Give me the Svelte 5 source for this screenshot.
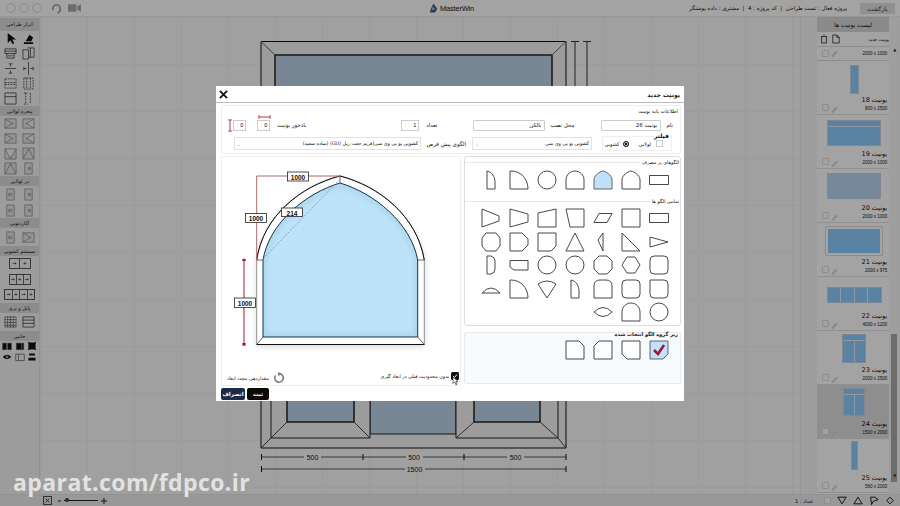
<script lang="ts">
  const ui = '"DejaVu Sans", "Liberation Sans", sans-serif';

  const toolIcons = {
    arrow: '<path fill="#111" stroke="none" d="M4 1v11l3-3 2 4 2-1-2-4h4z"/>',
    eraser: '<path fill="#111" stroke="none" d="M2 11h10v2H2zM4 10l4-7 4 3-2 4z"/>',
    stackH: '<path d="M1 2h12v5H1zM3 7v5h8V7M1 4.5h12M4 9.500h6"/>',
    stackV: '<path d="M1 3h6v10H1zM6 1h7v10H7M9 1v10"/>',
    splitH: '<path d="M1 7h12M7 2v3M7 9v3M5 2h4M5 12h4"/>',
    splitV: '<path d="M7 0v14M2 7h3M9 7h3M2 5v4M12 5v4"/>',
    barsH: '<path d="M1 2h12v10H1zM1 6h12M1 8h12" stroke-dasharray="2 1"/>',
    barsV: '<path d="M2 1h10v12H2zM5 1v12M9 1v12" stroke-dasharray="2 1"/>',
    box: '<path d="M1 1h12v12H1zM1 5h12"/>',
    dims: '<path d="M4 1v12M9 1v12M2 1h4M2 13h4" stroke-dasharray="2 1"/>',
    w1: '<path stroke="#8a8a8a" fill="#e6e6e6" d="M1 2h12v10H1zM1 2l8 5-8 5M9 6v2"/>',
    w2: '<path stroke="#8a8a8a" fill="#e6e6e6" d="M1 2h12v10H1zM13 2L5 7l8 5M5 6v2"/>',
    w3: '<path stroke="#8a8a8a" fill="#e6e6e6" d="M1 2h12v11H1zM1 2l6 11 6-11M6 11h2"/>',
    w4: '<path stroke="#8a8a8a" fill="#e6e6e6" d="M1 1h12v12H1zM1 13L7 2l6 11M6 3h2"/>',
    door1: '<path stroke="#8a8a8a" fill="#e6e6e6" d="M3 1h8v12H3zM5 6h3v2H5z"/>',
    door2: '<path stroke="#8a8a8a" fill="#e6e6e6" d="M3 1h8v12H3zM7 6h2v2H7z"/>',
    grid: '<path d="M1 2h12v11H1zM1 5h12M1 8h12M1 11h12M4 2v11M7 2v11M10 2v11" stroke-dasharray="1.500 .5"/>',
    lines: '<path d="M1 2h12v11H1zM1 5.500h12M1 9h12"/>',
    sideA: '<path fill="#111" d="M1 3h5v9H1zM8 3h5v9H8z"/>',
    sideB: '<path fill="#111" d="M2 3h7v9H2zM10 3h2v9h-2z"/>',
    sideC: '<path fill="#111" stroke="none" d="M1 1l3 1 6 0 3-1-1 3v6l1 3-3-1H4l-3 1 1-3V4z"/>',
    sideD: '<path d="M1 3h12v9H1zM5 3v9"/>',
    sideE: '<path fill="#111" stroke="none" d="M1 7q6-6 12 0-6 6-12 0z"/><circle cx="7" cy="7" r="2" fill="#999" stroke="none"/>',
    sideF: '<path fill="#111" stroke="none" d="M3 2h8v3H3zM2 8h10v4H2z"/>'
  };

  const toolGroups = [
    { title: 'ابزار طراحی', tall: true, rowH: 15, rows: [['arrow', 'eraser'], ['stackH', 'stackV'], ['splitH', 'splitV'], ['barsH', 'barsV'], ['box', 'dims']] },
    { title: 'پنجره لولایی', rowH: 15, rows: [['w1', 'w2'], ['w1', 'w2'], ['w3', 'w4'], ['w4', 'door2']] },
    { title: 'در لولایی', rowH: 16, rows: [['door1', 'door2'], ['door1', 'door2']] },
    { title: 'آکاردئونی', rowH: 18, rows: [['door1', 'w1']] },
    { title: 'سیستم کشویی', rowH: 15.5, rows: [['slide2'], ['slide3'], ['slide4']] },
    { title: 'پانل و نری', rowH: 18, rows: [['grid', 'lines']] },
    { title: 'جانبی', rowH: 11, small: true, rows: [['sideA', 'sideB', 'sideC'], ['sideE', 'sideD', 'sideF']] }
  ];

  const slideWidth = { slide2: 22, slide3: 22, slide4: 31 };
  const slidePanes = { slide2: 2, slide3: 3, slide4: 4 };

  const units = [
    { name: 'یونیت 18', size: '800 x 2500', w: 7, h: 27, panes: 1, top: 5 },
    { name: 'یونیت 19', size: '2000 x 1000', w: 52, h: 24, panes: 1, bar: true, top: 6 },
    { name: 'یونیت 20', size: '2000 x 1000', w: 52, h: 24, panes: 1, pale: true, top: 5 },
    { name: 'یونیت 21', size: '2000 x 975', w: 52, h: 24, panes: 1, framed: true, top: 6 },
    { name: 'یونیت 22', size: '4000 x 1200', w: 53, h: 14, panes: 4, top: 11 },
    { name: 'یونیت 23', size: '2000 x 2500', w: 22, h: 27, panes: 2, bar: true, top: 4 },
    { name: 'یونیت 24', size: '1500 x 2000', w: 20, h: 26, panes: 2, bar: true, top: 4, active: true },
    { name: 'یونیت 25', size: '560 x 2000', w: 5, h: 27, panes: 1, top: 3 }
  ];

  const circle = 'M1 10a9 9 0 1 0 18 0a9 9 0 1 0-18 0Z';
  const arch = 'M1 19V10C1 5 5 1 10 1S19 5 19 10V19Z';
  const pointed = 'M1 19V9C2 5 6 2 10 1C14 2 18 5 19 9V19Z';
  const quarter = 'M1 19V1H2C12 1 19 9 19 19Z';
  const halfArch = 'M6 19V1C11 2 14 7 14 12V19Z';

  const favorites = [
    { d: 'M0.500 5.500H19.500V14.500H0.500Z' },
    { d: pointed },
    { d: pointed, on: true },
    { d: arch },
    { d: circle },
    { d: quarter },
    { d: halfArch }
  ];

  const allShapes = [
    'M0.500 5.500H19.500V14.500H0.500Z', 'M1 1H19V19H1Z', 'M6 5.500H19L14 14.500H1Z', 'M1 1H19V19H5Z', 'M1 5L19 1V19H1Z', 'M1 1L19 6V14L1 19Z', 'M1 1L18 8V13L1 19Z',
    'M1 5L19 10L1 15Z', 'M1 1L19 19H1Z', 'M10 1L5 8L10 19Z', 'M10 1L19 19H1Z', 'M1 1H19V14L14 19H1Z', 'M1 1H13L19 7V13L13 19H1Z', 'M5 1H15L19 6V14L15 19H5L1 14V6Z',
    'M5 1H15Q19 1 19 5V15Q19 19 15 19H5Q1 19 1 15V5Q1 1 5 1Z', 'M6 2H14L19 10L14 18H6L1 10Z', 'M6 1H14L19 6V14L14 19H6L1 14V6Z', circle, circle, 'M1 5.500H19V15H5L1 12Z', 'M6 1H10Q14 2 14 6V14Q14 18 10 19H6Z',
    'M1 1H15Q19 1 19 5V15Q19 19 15 19H5Q1 19 1 15Z', 'M5 1H15Q19 1 19 5V15Q19 19 15 19H5Q1 19 1 15V5Q1 1 5 1Z', 'M1 19V7Q1 1 7 1H13Q19 1 19 7V19Z', halfArch, 'M1 5Q10 -1 19 5L10 19Z', quarter, 'M1 14Q10 4 19 14Z',
    circle, arch, 'M1 10Q10 1 19 10Q10 19 1 10Z'
  ];

  const subShapes = [
    { d: 'M1 1H19V14L14 19H1Z', on: true },
    { d: 'M1 1H19V19H6L1 14Z' },
    { d: 'M6 1H19V19H1V6Z' },
    { d: 'M1 1H14L19 6V19H1Z' }
  ];
</script>

<div class="app" style="--ui: {ui}">
  <header class="topbar">
    <div class="top-icons">
      <span class="round"></span><span class="round"></span><span class="round"></span>
      <svg class="headset" viewBox="0 0 12 12" width="11" height="11"><path fill="none" stroke="#aaa" stroke-width="2" d="M2 8V6a4 4 0 0 1 8 0v3l-3 2"/></svg>
      <svg viewBox="0 0 14 10" width="13" height="10"><path fill="#aaa" d="M0 1h9v8H0zM10 3l4-2v8l-4-2z"/></svg>
    </div>
    <div class="logo">
      <svg viewBox="0 0 12 12" width="9" height="10"><path fill="#3d5f86" d="M6 0L11 7 8 12H1L3 6z"/><path fill="#c9d4e0" d="M5 4l3 3-4 2z"/></svg>
      <span>MasterWin</span>
    </div>
    <div class="project">پروژه فعال : تست طراحی &nbsp;|&nbsp; کد پروژه : 4 &nbsp;|&nbsp; مشتری : داده پوشنگر</div>
    <button class="back">بازگشت</button>
  </header>

  <div class="body">
    <aside class="tools">
      {#each toolGroups as g}
        <div class="tool-title" class:tall={g.tall}>{g.title}</div>
        {#each g.rows as row}
          <div class="tool-row" style="height: {g.rowH}px">
            {#each row as name}
              {#if slidePanes[name]}
                <div class="slider" style="width: {slideWidth[name]}px">
                  {#each Array(slidePanes[name]) as _, i}
                    <span>{i % 2 ? '+' : '→'}</span>
                  {/each}
                </div>
              {:else}
                <svg viewBox="0 0 14 14" width={g.small ? 10 : 13} height={g.small ? 10 : 13} fill="none" stroke="#333" stroke-width=".8">{@html toolIcons[name]}</svg>
              {/if}
            {/each}
          </div>
        {/each}
      {/each}
    </aside>

    <main class="canvas">
      <svg class="drawing" viewBox="40 17 760 477" width="760" height="477">
        <g fill="none" stroke="#111">
          <path fill="#f4f4f4" stroke="#111" d="M261 41.500H566V448H261Z"/>
          <path fill="#bed3ea" stroke="#222" stroke-width="1.500" d="M275 55H552V100H275Z"/>
          <path d="M261 41.500L275 55M566 41.500L552 55" stroke="#666"/>
          <path d="M575 41.500V100M587 41.500V100M571 41.500h8M583 41.500h8" stroke="#333"/>
          <path fill="#bed3ea" stroke="#222" d="M370 380H456V434H370Z"/>
          <path fill="#f4f4f4" stroke="#222" stroke-width="1" d="M271 380H370V438H271ZM456 380H558V438H456Z"/>
          <path fill="#bed3ea" stroke="#222" stroke-width="1.500" d="M287 380H354V422H287ZM474 380H540V422H474Z"/>
          <path d="M271 438L287 422M370 438L354 422M456 438L474 422M558 438L540 422M261 448L271 438M566 448L558 438" stroke="#444"/>
          <path d="M261 457H566M261 469H566" stroke="#333" stroke-width=".8"/>
          <path d="M261.500 454v6M363 454v6M464 454v6M566 454v6M261.500 466v6M566 466v6" stroke="#111"/>
        </g>
        <g class="dim-text">
          <rect x="304" y="452" width="17" height="9" fill="#fbfbfb"/><text x="312.500" y="459.500">500</text>
          <rect x="406" y="452" width="17" height="9" fill="#fbfbfb"/><text x="414" y="459.500">500</text>
          <rect x="507" y="452" width="17" height="9" fill="#fbfbfb"/><text x="515.500" y="459.500">500</text>
          <rect x="405" y="464" width="20" height="9" fill="#fbfbfb"/><text x="414.500" y="471.500">1500</text>
        </g>
      </svg>
    </main>

    <aside class="side">
      <div class="list">
        <div class="list-title">لیست یونیت ها</div>
        <div class="list-tools">
          <svg viewBox="0 0 10 12" width="8" height="10"><path fill="none" stroke="#222" d="M1 3h8M2 3v8h6V3M4 1h2"/></svg>
          <svg viewBox="0 0 10 12" width="8" height="10"><path fill="none" stroke="#222" d="M1 1h5l3 3v7H1zM6 1v3h3"/></svg>
          <span class="new">یونیت جدید</span>
        </div>
        <div class="stub"><span class="check"></span><span class="pen"></span><small>2000 x 1000</small></div>
        {#each units as u}
          <div class="unit" class:active={u.active}>
            <div class="thumb-wrap" style="padding-top: {u.top}px">
              <div class="thumb" class:pale={u.pale} class:framed={u.framed} class:bar={u.bar} style="width: {u.w}px; height: {u.h}px">
                {#each Array(u.panes) as _}<i></i>{/each}
              </div>
            </div>
            <div class="unit-foot">
              <span class="check"></span><span class="pen"></span>
              <div class="unit-text"><b>{u.name}</b><small>{u.size}</small></div>
            </div>
          </div>
        {/each}
      </div>
      <div class="scroll"><span class="arrow">▲</span><div class="thumb-bar"></div><span class="arrow">▼</span></div>
    </aside>
  </div>

  <footer class="bottombar">
    <svg class="fit" viewBox="0 0 10 10" width="9" height="9"><path fill="none" stroke="#333" d="M.5.5h9v9h-9zM3 3l4 4M7 3L3 7"/></svg>
    <svg class="zoom-btn minus" viewBox="0 0 6 6" width="6" height="6"><path stroke="#222" d="M1 3h3"/></svg>
    <span class="zoom-track"><i></i></span>
    <svg class="zoom-btn" viewBox="0 0 6 6" width="6" height="6"><path stroke="#222" d="M0 3h6M3 0v6"/></svg>
    <span class="count">تعداد : 1</span>
    <div class="foot-icons">
      <span class="check"></span>
      <svg viewBox="0 0 12 10" width="10" height="9"><path fill="none" stroke="#222" stroke-width="1.200" d="M1 1h10L6 9z"/></svg>
      <svg viewBox="0 0 12 10" width="10" height="9"><path fill="none" stroke="#222" stroke-width="1.200" d="M1 9h10L6 1z"/></svg>
      <svg viewBox="0 0 12 10" width="10" height="9"><path fill="none" stroke="#222" stroke-width="1.200" d="M2 1h5l4 3-6 2-2 4z"/></svg>
      <svg viewBox="0 0 12 10" width="10" height="9"><path fill="none" stroke="#222" stroke-width="1.200" d="M6 1l4 4-4 4-4-4z"/></svg>
    </div>
  </footer>

  <div class="backdrop"></div>

  <div class="modal">
    <div class="modal-head">
      <svg viewBox="0 0 10 10" width="9" height="9"><path stroke="#111" stroke-width="2" d="M1 1l8 8M9 1L1 9"/></svg>
      <b>یونیت جدید</b>
    </div>

    <section class="basic">
      <div class="basic-title">اطلاعات پایه یونیت</div>
      <div class="form-row r1">
        <label class="l-name" for="n">نام</label>
        <input id="n" class="f-name" value="یونیت 26" />
        <label class="l-place" for="p">محل نصب</label>
        <input id="p" class="f-place" value="بالکن" />
        <label class="l-count" for="p">تعداد</label>
        <div class="spin f-count"><span>1</span><em>:</em></div>
        <label class="l-wind" for="p">بادخور یونیت</label>
        <div class="spin f-wind"><span>0</span><em>:</em>
          <svg class="h-arrow" viewBox="0 0 14 6" width="13" height="6"><path stroke="#a33044" fill="none" d="M1 1v4M13 1v4M1 3h12"/></svg>
        </div>
        <div class="spin f-wind2"><span>0</span><em>:</em>
          <svg class="v-arrow" viewBox="0 0 6 14" width="6" height="13"><path stroke="#a33044" fill="none" d="M1 1h4M1 13h4M3 1v12"/></svg>
        </div>
      </div>
      <div class="form-row r2">
        <div class="filter">
          <span class="legend">فیلتر</span>
          <span class="box"></span><span class="opt">لولایی</span>
          <span class="radio"></span><span class="opt">کشویی</span>
        </div>
        <div class="select f-type"><span>کشویی یو پی وی سی</span><em>⌄</em></div>
        <span class="l-default">الگوی پیش فرض</span>
        <div class="select f-default"><span>کشویی یو پی وی سی(فریم جفت ریل (GU) (ساده سفید)</span><em>⌄</em></div>
      </div>
    </section>

    <div class="panels">
      <section class="preview">
        <svg viewBox="221 156 238 208" width="238" height="208">
          <defs>
            <clipPath id="glassClip"><path d="M262 336V259C268 222 305 192 339 182C373 192 410 222 416.700 259V336Z"/></clipPath>
            <filter id="soft" x="-20%" y="-20%" width="140%" height="140%"><feGaussianBlur stdDeviation="3"/></filter>
          </defs>
          <path d="M255.700 343.500V259C262 215 300 185 339 175C378 185 416 215 423.300 259V343.500Z" fill="#d5d5d5" filter="url(#soft)" transform="translate(0 2)"/>
          <path d="M255.700 343.500V259C262 215 300 185 339 175C378 185 416 215 423.300 259V343.500Z" fill="#fff" stroke="#777" stroke-width=".8"/>
          <path d="M255.700 259C262 215 300 185 339 175C378 185 416 215 423.300 259" fill="none" stroke="#111" stroke-width="1"/>
          <path d="M262 336V259C268 222 305 192 339 182C373 192 410 222 416.700 259V336Z" fill="#bde3f8"/>
          <g clip-path="url(#glassClip)"><path d="M262 336V259C268 222 305 192 339 182C373 192 410 222 416.700 259V336Z" fill="none" stroke="#a5cfe6" stroke-width="5" filter="url(#soft)"/></g>
          <path d="M262 336V259C268 222 305 192 339 182C373 192 410 222 416.700 259V336Z" fill="none" stroke="#15344a" stroke-width="1"/>
          <path d="M255.700 343.500L262 336M423.300 343.500L416.700 336M339 175V182M255.700 259H262M423.300 259H416.700" stroke="#444" stroke-width=".8"/>
          <path d="M255.700 343.500H423.300" stroke="#111" stroke-width="1"/>
          <path d="M339 178L262 258" stroke="#7c93ad" stroke-width=".8" stroke-dasharray="2 1.500" fill="none"/>
          <path d="M255.700 259V175H339" fill="none" stroke="#a96b6b" stroke-width="1"/>
          <path d="M243 258V344M241 259h4M241 344h4" fill="none" stroke="#a01c33" stroke-width="1"/>
          <path d="M243 257l-2 3h4zM243 345l-2-3h4z" fill="#a01c33"/>
          <g class="dim-box">
            <rect x="286.500" y="171" width="21" height="9"/><text x="297" y="178.500">1000</text>
            <rect x="244.500" y="212.500" width="21" height="9"/><text x="255" y="220">1000</text>
            <rect x="280.500" y="207" width="21" height="8.500"/><text x="291" y="214.500">214</text>
            <rect x="233.500" y="297" width="21" height="9.500"/><text x="244" y="305">1000</text>
          </g>
        </svg>
        <div class="preview-foot">
          <div class="reset">
            <span>مقداردهی مجدد ابعاد</span>
            <svg viewBox="0 0 14 14" width="12" height="12"><path fill="none" stroke="#777" stroke-width="1.800" d="M8 2A5 5 0 1 1 3 4"/><path fill="#777" d="M6 0l4 2-4 3z"/></svg>
          </div>
          <div class="no-limit">
            <span>بدون محدودیت قبلی در ابعاد گیری</span>
            <span class="tick">
              <svg viewBox="0 0 8 8" width="8" height="8"><rect width="8" height="8" rx="1.500" fill="#111"/><path d="M2 4l1.500 1.500L6 2.500" fill="none" stroke="#fff"/></svg>
              <svg class="cursor" viewBox="0 0 8 12" width="7" height="10"><path d="M1 1v8l2-2 1.500 3.500 1.500-.7L4.500 6.500H7z" fill="#fff" stroke="#111" stroke-width=".7"/></svg>
            </span>
          </div>
        </div>
      </section>

      <div class="picker">
        <section class="shapes">
          <div class="shape-title first"><span>الگوهای پر مصرف</span></div>
          <div class="shape-grid fav">
            {#each favorites as s}
              <svg viewBox="0 0 20 20" width="20" height="20"><path d={s.d} class:on={s.on} /></svg>
            {/each}
          </div>
          <div class="shape-title"><span>تمامی الگو ها</span></div>
          <div class="shape-grid">
            {#each allShapes as d}
              <svg viewBox="0 0 20 20" width="20" height="20"><path {d} /></svg>
            {/each}
          </div>
        </section>
        <section class="sub">
          <div class="sub-title">زیر گروه الگو انتخاب شده</div>
          <div class="shape-grid">
            {#each subShapes as s}
              <div class="sub-cell">
                <svg viewBox="0 0 20 20" width="20" height="20">
                  <path d={s.d} class:on={s.on} />
                  {#if s.on}<path class="mark" d="M5 10l4 4 6-9"/>{/if}
                </svg>
              </div>
            {/each}
          </div>
        </section>
      </div>
    </div>

    <div class="actions">
      <button class="cancel">انصراف</button>
      <button class="save">ثبت</button>
    </div>
  </div>

  <div class="watermark">aparat.com/fdpco.ir</div>
</div>

<style>
  :global(body) { margin: 0; }

  .app {
    position: relative;
    width: 900px;
    height: 506px;
    overflow: hidden;
    display: flex;
    flex-direction: column;
    background: #fbfbfb;
    font-family: var(--ui);
    color: #111;
  }

  /* top */
  .topbar {
    height: 17px;
    flex: none;
    display: flex;
    align-items: center;
    background: #fff;
    border-bottom: 1px solid #ececec;
    box-sizing: border-box;
    padding: 0 5px 0 6px;
    position: relative;
  }
  .top-icons { display: flex; align-items: center; gap: 2px; width: 80px; }
  .round { width: 10px; height: 10px; border-radius: 50%; border: 1px solid #d8d8d8; box-sizing: border-box; margin-right: 1px; }
  .headset { margin: 0 4px 0 6px; }
  .logo { margin-left: 343px; display: flex; align-items: center; gap: 2px; font: 7.500px "Liberation Sans", sans-serif; color: #222; letter-spacing: -.2px; }
  .project { margin-left: auto; margin-right: 13px; font-size: 5.500px; direction: rtl; color: #111; white-space: nowrap; }
  .back {
    width: 35px; height: 11px; padding: 0; border: 0; border-radius: 1px;
    background: #e2e2e2; font: 6px var(--ui); color: #333;
  }

  .body { flex: 1; display: flex; min-height: 0; }

  /* left tools */
  .tools { width: 39px; flex: none; background: #f5f5f5; border-right: 1px solid #e4e4e4; padding-top: 1px; box-sizing: content-box; }
  .tool-title { height: 10px; line-height: 10px; background: #dcdcdc; text-align: center; font-size: 5px; color: #111; direction: rtl; white-space: nowrap; overflow: hidden; }
  .tool-title.tall { height: 13px; line-height: 13px; }
  .tool-row { display: flex; align-items: center; justify-content: space-evenly; }
  .slider { height: 11px; display: flex; border: 1px solid #555; box-sizing: border-box; background: #f2f2f2; }
  .slider span { flex: 1; font-size: 5px; line-height: 9px; text-align: center; border-right: 1px solid #666; color: #111; }
  .slider span:last-child { border: 0; }

  .canvas {
    flex: 1;
    position: relative;
    overflow: hidden;
    background-image:
      linear-gradient(#f3f3f3 1px, transparent 1px),
      linear-gradient(90deg, #f3f3f3 1px, transparent 1px);
    background-size: 47px 47px;
  }
  .drawing { display: block; }
  .dim-text text { font: 7px "Liberation Sans", sans-serif; text-anchor: middle; fill: #111; }

  /* right list */
  .side { width: 100px; flex: none; display: flex; padding: 0 2px 0 16px; box-sizing: border-box; background: #f7f7f7; border-left: 1px solid #eaeaea; }
  .list { width: 74px; display: flex; flex-direction: column; overflow: hidden; background: #fff; }
  .list-title { height: 15px; line-height: 15px; flex: none; background: #d8d8d8; text-align: center; font-size: 6px; direction: rtl; }
  .list-tools { height: 14px; flex: none; display: flex; align-items: center; gap: 4px; padding-left: 3px; border-bottom: 1px solid #ddd; }
  .new { margin-left: auto; font-size: 4.500px; direction: rtl; }
  .stub { height: 13px; flex: none; display: flex; align-items: center; gap: 2px; padding: 0 2px 0 5px; border-bottom: 1px solid #ddd; }
  .stub small { margin-left: auto; font: 4.500px "Liberation Sans", sans-serif; }
  .check { width: 5px; height: 5px; border: 1px solid #ddd; border-radius: 1px; background: #fff; flex: none; }
  .pen { width: 7px; height: 2px; background: #d5d5d5; transform: rotate(-45deg); flex: none; }
  .unit { height: 54px; flex: none; box-sizing: border-box; border-bottom: 1px solid #e2e2e2; display: flex; flex-direction: column; background: #fff; }
  .unit.active { background: #dedede; }
  .thumb-wrap { flex: 1; display: flex; justify-content: center; align-items: flex-start; margin-left: 2px; }
  .thumb { display: flex; gap: 1px; padding: 0; background: #e4eef7; outline: 1px solid #c7d5e4; position: relative; box-sizing: border-box; }
  .thumb i { flex: 1; background: #8ccbff; }
  .thumb.bar { padding-top: 6px; }
  .thumb.bar::before { content: ''; position: absolute; left: 0; right: 0; top: 0; height: 5px; background: #8ccbff; }
  .thumb.pale i { background: #b8d6f2; }
  .thumb.framed { outline: 2px solid #fff; box-shadow: 0 0 0 2.500px #bbb; }
  .unit-foot { height: 17px; flex: none; display: flex; align-items: flex-end; gap: 2px; padding: 0 2px 3px 5px; }
  .unit-text { margin-left: auto; display: flex; flex-direction: column; align-items: flex-end; }
  .unit-text b { font: 6.500px var(--ui); direction: rtl; }
  .unit-text small { font: 4.500px "Liberation Sans", sans-serif; margin-top: 2px; }
  .scroll { width: 7px; margin-left: 2px; position: relative; }
  .arrow { position: absolute; left: 0; width: 7px; text-align: center; font-size: 4px; color: #222; }
  .arrow:first-child { top: 30px; }
  .arrow:last-child { top: 456px; }
  .thumb-bar { position: absolute; top: 317px; height: 148px; left: 0; width: 6px; background: #aaa; }

  .bottombar { height: 12px; flex: none; display: flex; align-items: center; background: #eee; border-top: 1px solid #e5e5e5; padding-left: 43px; font-size: 7px; color: #111; box-sizing: border-box; }
  .fit { background: #e8e8e8; flex: none; }
  .zoom-btn { flex: none; margin: 0 3px; }
  .zoom-btn.minus { margin: 0 1px 0 5px; }
  .zoom-track { width: 34px; height: 1.500px; background: #222; position: relative; }
  .zoom-track i { position: absolute; left: 1px; top: -1.500px; width: 4px; height: 4px; border-radius: 50%; background: #444; }
  .count { margin-left: auto; font-size: 5px; direction: rtl; margin-right: 11px; }
  .foot-icons { display: flex; align-items: center; gap: 6px; margin-right: 5px; }

  .backdrop { position: absolute; inset: 0; background: rgba(0, 0, 0, .36); }

  /* dialog */
  .modal {
    position: absolute;
    left: 216px;
    top: 86px;
    width: 468px;
    height: 315px;
    background: #fff;
    display: flex;
    flex-direction: column;
    box-sizing: border-box;
    padding: 0 3px 0 5px;
    font-size: 5.500px;
  }
  .modal-head {
    height: 16px;
    flex: none;
    margin: 0 -3px 0 -5px;
    padding: 0 4px 0 3px;
    display: flex;
    align-items: center;
    justify-content: space-between;
    border-bottom: 1px solid #bbb;
  }
  .modal-head b { font-size: 6px; direction: rtl; }

  .basic { height: 49px; flex: none; margin-top: 2px; border: 1px solid #eee; border-radius: 2px; box-sizing: border-box; position: relative; direction: rtl; }
  .basic-title { position: absolute; right: 2px; top: 2px; font-size: 5px; background: #fff; }
  .form-row { display: flex; align-items: center; position: absolute; left: 0; right: 0; direction: rtl; }
  .r1 { top: 13px; height: 12px; padding-right: 7px; }
  .r2 { top: 30px; height: 15px; padding-right: 8px; }
  input {
    box-sizing: border-box; height: 11px; padding: 0 3px; border: 1px solid #ccc; border-radius: 1px;
    font: 5.500px var(--ui); color: #111; background: #fff; outline: none; text-align: right; direction: rtl;
  }
  .f-name { width: 60px; margin: 0 5px; }
  .l-place { margin-right: 22px; width: 29px; }
  .f-place { width: 72px; }
  .l-count { margin-right: 36px; width: 13px; margin-left: 5px; }
  .f-count { width: 18px; flex: none; }
  .l-wind { margin-right: 95px; width: 31px; margin-left: 5px; white-space: nowrap; }
  .f-wind, .f-wind2 { width: 13px; flex: none; }
  .f-wind2 { margin-right: 11px; }
  .spin { height: 11px; box-sizing: border-box; border: 1px solid #ccc; display: flex; justify-content: space-between; padding: 0 2px; font: 5.500px "Liberation Sans", sans-serif; line-height: 9px; position: relative; }
  .spin em { font-style: normal; color: #888; }
  .h-arrow { position: absolute; left: 0; top: -7px; }
  .v-arrow { position: absolute; left: -7px; top: -2px; }

  .filter { width: 70px; height: 15px; flex: none; box-sizing: border-box; border: 1px solid #eee; display: flex; align-items: center; position: relative; padding-right: 8px; }
  .legend { position: absolute; right: 2px; top: -5px; font-size: 6px; font-weight: bold; background: #fff; line-height: 7px; }
  .box { width: 5px; height: 5px; flex: none; border: 1px solid #ccc; margin-left: 5px; }
  .opt { font-size: 5px; white-space: nowrap; }
  .radio { width: 4px; height: 4px; flex: none; border: 1.500px solid #222; border-radius: 50%; margin: 0 9px 0 4px; background: #222; box-shadow: inset 0 0 0 .7px #fff; }
  .select { height: 13px; box-sizing: border-box; border: 1px solid #e2e2e2; display: flex; align-items: center; justify-content: space-between; padding: 0 2px; color: #111; white-space: nowrap; font-size: 4.800px; flex: none; }
  .select em { font-style: normal; color: #999; font-size: 5px; }
  .f-type { width: 120px; margin-right: 10px; }
  .l-default { margin: 0 6px 0 5px; width: 40px; white-space: nowrap; }
  .f-default { width: 187px; }

  .panels { display: flex; gap: 3px; flex: none; height: 230px; margin-top: 2px; }
  .preview { width: 240px; height: 230px; box-sizing: border-box; border: 1px solid #eee; border-radius: 2px; display: flex; flex-direction: column; flex: none; }
  .preview > svg { display: block; }
  .dim-box rect { fill: #fff; stroke: #222; stroke-width: .8; }
  .dim-box text { font: bold 6.500px "Liberation Sans", sans-serif; text-anchor: middle; fill: #111; }
  .preview-foot { flex: 1; display: flex; justify-content: space-between; align-items: flex-start; padding: 7px 1px 0 5px; font-size: 4.800px; direction: ltr; }
  .reset { display: flex; align-items: center; gap: 4px; direction: rtl; flex-direction: row-reverse; }
  .no-limit { display: flex; align-items: center; gap: 2px; }
  .no-limit > span:first-child { direction: rtl; }
  .tick { position: relative; display: flex; }
  .cursor { position: absolute; left: 1px; top: 4px; }

  .picker { width: 218px; display: flex; flex-direction: column; gap: 6px; }
  .shapes { height: 170px; flex: none; box-sizing: border-box; border: 1px solid #ddd; border-radius: 3px; padding-right: 7px; }
  .shape-title { height: 11px; margin-right: -7px; font-size: 4.800px; direction: rtl; display: flex; align-items: center; gap: 2px; padding-right: 1px; }
  .shape-title::after { content: ''; flex: 1; height: 1px; background: #e8e8e8; }
  .shape-grid { display: grid; grid-template-columns: repeat(7, 28px); grid-auto-rows: 23.500px; direction: rtl; justify-items: center; align-items: center; }
  .shape-grid.fav { margin-bottom: 4px; }
  .shape-grid path { fill: #fff; stroke: #333; stroke-width: .9; }
  .shape-grid path.on { fill: #bfe2fa; stroke: #555; }
  .shape-grid path.mark { fill: none; stroke: #a31530; stroke-width: 2.600; }
  .sub { height: 52px; box-sizing: border-box; border: 1px solid #eaeaea; border-radius: 2px; background: #f8fbfd; padding-right: 7px; }
  .sub-title { height: 8px; margin-top: -3px; font-size: 5px; font-weight: bold; direction: rtl; margin-right: -5px; line-height: 8px; }
  .sub-cell { display: flex; }

  .actions { display: flex; gap: 2px; margin-top: 2px; }
  .actions button { height: 12px; border: 0; padding: 0; border-radius: 2px; color: #fff; font: bold 5.500px var(--ui); }
  .cancel { width: 24px; background: #1c2a44; }
  .save { width: 22px; background: #0a0a0a; }

  .watermark {
    position: absolute;
    left: 13px;
    top: 471px;
    font: bold 23px/23px "Open Sans", "DejaVu Sans", sans-serif;
    letter-spacing: .4px;
    color: #e2e2e2;
    white-space: nowrap;
  }
</style>
